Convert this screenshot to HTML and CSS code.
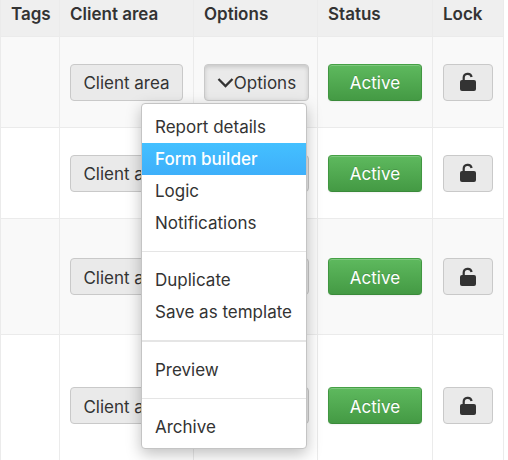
FILE: index.html
```html
<!DOCTYPE html>
<html lang="en">
<head>
    <meta charset="UTF-8">
    <meta name="viewport" content="width=device-width, initial-scale=1.0">
    <title>Reports</title>
    <link rel="stylesheet" href="styles.css">
</head>
<body>
    <!-- Shared icons -->
    <svg class="icon-defs" aria-hidden="true">
        <symbol id="icon-unlock" viewBox="0 0 18 20">
            <path d="M4.7 9V5.8a4 4 0 0 1 7.9-.9" fill="none" stroke="currentColor" stroke-width="2.2"/>
            <rect x="1" y="8" width="16" height="11" rx="2" fill="currentColor"/>
        </symbol>
        <symbol id="icon-chevron" viewBox="0 0 17 12">
            <path d="M1.5 2l7 7 7-7" fill="none" stroke="currentColor" stroke-width="2.3"/>
        </symbol>
    </svg>

    <div class="table-wrap">
        <table class="reports">
            <colgroup>
                <col class="col-tags">
                <col class="col-client">
                <col class="col-options">
                <col class="col-status">
                <col class="col-lock">
            </colgroup>
            <thead>
                <tr>
                    <th>Tags</th>
                    <th>Client area</th>
                    <th>Options</th>
                    <th>Status</th>
                    <th>Lock</th>
                </tr>
            </thead>
            <tbody>
                <tr>
                    <td></td>
                    <td><button type="button" class="btn">Client area</button></td>
                    <td class="options">
                        <div class="dropdown">
                            <button type="button" class="btn open" aria-expanded="true"><svg class="chevron"><use href="#icon-chevron"/></svg>Options</button>
                            <ul class="menu">
                                <li><a href="#">Report details</a></li>
                                <li><a href="#" class="selected">Form builder</a></li>
                                <li><a href="#">Logic</a></li>
                                <li><a href="#">Notifications</a></li>
                                <li class="divider"></li>
                                <li><a href="#">Duplicate</a></li>
                                <li><a href="#">Save as template</a></li>
                                <li class="divider"></li>
                                <li class="divider joined"></li>
                                <li><a href="#">Preview</a></li>
                                <li class="divider"></li>
                                <li><a href="#">Archive</a></li>
                            </ul>
                        </div>
                    </td>
                    <td><button type="button" class="btn btn-success">Active</button></td>
                    <td><button type="button" class="btn btn-lock" aria-label="Lock"><svg class="unlock"><use href="#icon-unlock"/></svg></button></td>
                </tr>
                <tr>
                    <td></td>
                    <td><button type="button" class="btn">Client area</button></td>
                    <td class="options"><button type="button" class="btn"><svg class="chevron"><use href="#icon-chevron"/></svg>Options</button></td>
                    <td><button type="button" class="btn btn-success">Active</button></td>
                    <td><button type="button" class="btn btn-lock" aria-label="Lock"><svg class="unlock"><use href="#icon-unlock"/></svg></button></td>
                </tr>
                <tr class="tall">
                    <td></td>
                    <td><button type="button" class="btn">Client area</button></td>
                    <td class="options"><button type="button" class="btn"><svg class="chevron"><use href="#icon-chevron"/></svg>Options</button></td>
                    <td><button type="button" class="btn btn-success">Active</button></td>
                    <td><button type="button" class="btn btn-lock" aria-label="Lock"><svg class="unlock"><use href="#icon-unlock"/></svg></button></td>
                </tr>
                <tr class="taller">
                    <td></td>
                    <td><button type="button" class="btn">Client area</button></td>
                    <td class="options"><button type="button" class="btn"><svg class="chevron"><use href="#icon-chevron"/></svg>Options</button></td>
                    <td><button type="button" class="btn btn-success">Active</button></td>
                    <td><button type="button" class="btn btn-lock" aria-label="Lock"><svg class="unlock"><use href="#icon-unlock"/></svg></button></td>
                </tr>
            </tbody>
        </table>
    </div>
</body>
</html>
```
FILE: styles.css
```css
* {
    box-sizing: border-box;
}
body {
    margin: 0;
    font-family: Inter, "Liberation Sans", sans-serif;
    font-size: 17px;
    line-height: 24px;
    color: #333;
    background-color: #fff;
}
.icon-defs {
    display: none;
}
.table-wrap {
    height: 100vh;
    padding-right: 4px;
    overflow: hidden;
}
.reports {
    width: 100%;
    table-layout: fixed;
    border-collapse: separate;
    border-spacing: 0;
    border-left: 1px solid #ebebeb;
}
.col-tags {
    width: 59px;
}
.col-client {
    width: 134px;
}
.col-options {
    width: 124px;
}
.col-status {
    width: 115px;
}
.reports th,
.reports td {
    text-align: left;
    vertical-align: middle;
    border-right: 1px solid #ebebeb;
    border-bottom: 1px solid #ebebeb;
}
.reports th {
    padding: 2px 0 10px 10px;
    font-weight: 600;
    white-space: nowrap;
    background-color: #efefef;
}
.reports td {
    height: 91px;
    padding: 0 10px;
}
.reports .options {
    padding-right: 8px;
}
.reports .tall td {
    height: 116px;
}
.reports .taller td {
    height: 142px;
}
.reports tbody tr:nth-child(odd) {
    background-color: #f9f9f9;
}
.btn {
    display: flex;
    align-items: center;
    justify-content: center;
    width: 100%;
    height: 37px;
    padding: 2px 0 0;
    font: inherit;
    color: #333;
    white-space: nowrap;
    background-color: #eaeaea;
    border: 1px solid #c9c9c9;
    border-radius: 4px;
    cursor: pointer;
}
.btn.open {
    box-shadow: inset 0 2px 4px rgba(0, 0, 0, 0.15);
}
.btn-success {
    color: #fff;
    text-shadow: 0 -1px 0 rgba(0, 0, 0, 0.15);
    background: linear-gradient(#5eb95e, #449a44);
    border-color: #45a045 #419641 #3a8a3a;
    box-shadow: inset 0 1px 0 rgba(255, 255, 255, 0.2), 0 1px 2px rgba(0, 0, 0, 0.05);
}
.btn-lock {
    padding: 0;
}
.chevron {
    width: 17px;
    height: 12px;
}
.unlock {
    width: 18px;
    height: 20px;
}
.dropdown {
    position: relative;
}
.menu {
    position: absolute;
    top: 39px;
    right: 2px;
    z-index: 10;
    min-width: 166px;
    margin: 0;
    padding: 7px 0 5px;
    list-style: none;
    background-color: #fff;
    border: 1px solid #c4c4c4;
    border-radius: 4px;
    box-shadow: 0 5px 15px rgba(0, 0, 0, 0.25);
}
.menu a {
    display: block;
    padding: 4px 12px 4px 13px;
    color: #333;
    text-decoration: none;
    white-space: nowrap;
}
.menu a:hover,
.menu a.selected {
    font-weight: 500;
    color: #fff;
    background: linear-gradient(#44c0ff, #3eaffa);
}
.menu .divider {
    height: 1px;
    margin: 12px 0;
    background-color: #e5e5e5;
}
.menu .joined {
    margin-top: -12px;
}
```
